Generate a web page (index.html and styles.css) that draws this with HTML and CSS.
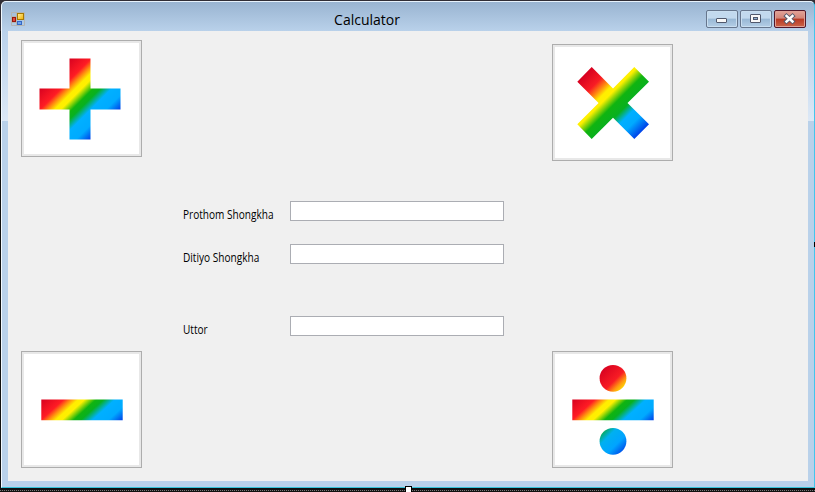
FILE: index.html
```html
<!DOCTYPE html>
<html lang="en">
<head>
<meta charset="utf-8">
<title>Calculator</title>
<link rel="stylesheet" href="styles.css">
</head>
<body>
<svg class="defs" width="0" height="0" aria-hidden="true">
  <defs>
    <linearGradient id="rainbow" gradientUnits="userSpaceOnUse" x1="33" y1="33" x2="84.5" y2="84.5">
      <stop offset="0" stop-color="#d60020"/><stop offset=".22" stop-color="#ff1c24"/><stop offset=".29" stop-color="#ff8a10"/><stop offset=".36" stop-color="#ffee00"/><stop offset=".42" stop-color="#fff000"/><stop offset=".53" stop-color="#10b410"/><stop offset=".6" stop-color="#08b020"/><stop offset=".71" stop-color="#00b0ff"/><stop offset=".86" stop-color="#00aaff"/><stop offset="1" stop-color="#0040e8"/>
    </linearGradient>
    <linearGradient id="rainbow-bar" href="#rainbow" x1="20" y1="48" x2="67.5" y2="100.3"/>
    <linearGradient id="rainbow-times" gradientUnits="userSpaceOnUse" x1="31.3" y1="31.3" x2="88.7" y2="88.7">
      <stop offset="0" stop-color="#d60020"/><stop offset=".18" stop-color="#f81c24"/><stop offset=".27" stop-color="#ff8a10"/><stop offset=".34" stop-color="#ffee00"/><stop offset=".4" stop-color="#fff000"/><stop offset=".52" stop-color="#10b410"/><stop offset=".64" stop-color="#08b020"/><stop offset=".74" stop-color="#00b0ff"/><stop offset=".85" stop-color="#00aaff"/><stop offset="1" stop-color="#0040e8"/>
    </linearGradient>
    <linearGradient id="dot-warm" x1=".1" y1=".1" x2=".9" y2=".9">
      <stop offset="0" stop-color="#d60020"/><stop offset=".58" stop-color="#f81c24"/><stop offset=".8" stop-color="#ff9a10"/><stop offset="1" stop-color="#ffe800"/>
    </linearGradient>
    <linearGradient id="dot-cool" x1=".1" y1=".1" x2=".9" y2=".9">
      <stop offset="0" stop-color="#08a840"/><stop offset=".28" stop-color="#00b0f0"/><stop offset=".65" stop-color="#00a4ff"/><stop offset="1" stop-color="#0048e8"/>
    </linearGradient>
    <linearGradient id="gold" x2="1" y2="1"><stop stop-color="#fff0a0"/><stop offset="1" stop-color="#efb000"/></linearGradient>
  </defs>
</svg>
<div class="window">
  <header class="titlebar">
    <svg class="app-icon" width="14" height="14" viewBox="0 0 14 14">
      <path d="M.5 .5h13v13H.5zM5.5 .5v13M.5 4.5h5M.5 10.5h5" fill="none" stroke="#b3b5b2"/>
      <rect x="6.5" y="1.5" width="6" height="6" fill="url(#gold)" stroke="#a87900"/>
      <rect x="1.5" y="5.5" width="3" height="4" fill="#e04838" stroke="#98170c"/>
      <rect x="6.5" y="9.5" width="4" height="3" fill="#6da4f0" stroke="#3568c4"/>
    </svg>
    <h1 class="title">Calculator</h1>
    <div class="controls">
      <button class="control" aria-label="Minimize"><svg width="30" height="16"><rect x="9.5" y="7.5" width="10" height="4" rx=".5" fill="#f8f8f8" stroke="#50586c"/></svg></button>
      <button class="control" aria-label="Maximize"><svg width="30" height="16"><rect x="9.5" y="3.5" width="10" height="8" rx=".5" fill="#f8f8f8" stroke="#50586c"/><rect x="12.5" y="6.5" width="4" height="2" fill="#8dafd0" stroke="#50586c"/></svg></button>
      <button class="control close" aria-label="Close"><svg width="30" height="16"><path d="M11.5 5l6 5.5M17.500 5l-6 5.500" stroke="#575a6c" stroke-width="4.400" stroke-linecap="square"/><path d="M11.500 5l6 5.500M17.500 5l-6 5.500" stroke="#fff" stroke-width="2.400" stroke-linecap="square"/></svg></button>
    </div>
  </header>
  <main class="client">
    <div class="operators">
      <button class="op" aria-label="Add"><svg width="121" height="117"><path d="M48.500 18.500h21v30h30v21h-30v30h-21v-30h-30v-21h30z" fill="url(#rainbow)"/></svg></button>
      <button class="op" aria-label="Subtract"><svg width="121" height="117"><path d="M20.300 48.600h81.400v20.600H20.300z" fill="url(#rainbow-bar)"/></svg></button>
    </div>
    <form class="fields">
      <label class="field"><span class="name">Prothom Shongkha</span><input type="text"></label>
      <label class="field"><span class="name">Ditiyo Shongkha</span><input type="text"></label>
      <label class="field result"><span class="name">Uttor</span><input type="text"></label>
    </form>
    <div class="operators right">
      <button class="op" aria-label="Multiply"><svg width="121" height="117"><path d="M39.700 23L61 44.500 82.300 23 97 37.700 75.500 59 97 80.300 82.300 95 61 73.700 39.700 95 25.300 80.300 46.600 59 25.300 37.700z" fill="url(#rainbow-times)"/></svg></button>
      <button class="op" aria-label="Divide"><svg width="121" height="117"><circle cx="61" cy="27.300" r="13.400" fill="url(#dot-warm)"/><path d="M20.300 48.600h81.400v20.600H20.300z" fill="url(#rainbow-bar)"/><circle cx="61" cy="90.300" r="13.400" fill="url(#dot-cool)"/></svg></button>
    </div>
  </main>
  <span class="handle east"></span>
  <span class="handle south"></span>
</div>
</body>
</html>
```
FILE: styles.css
```css
* { box-sizing: border-box; }
body {
  margin: 0;
  width: 815px;
  height: 492px;
  overflow: hidden;
  background: repeating-linear-gradient(90deg, #777 0 1px, #181818 1px 2px) 0 490px / 100% 1px no-repeat, linear-gradient(#302d35 0 31px, #101010 31px);
  font-family: "Open Sans", sans-serif;
  color: #000;
}
.defs { position: absolute; }
.window {
  position: relative;
  width: 814px;
  height: 487px;
  margin: 1px 0 0 1px;
  padding: 0 6px 6px 6px;
  border: 1px solid;
  border-color: #e7f2fc #43c5ed #36c3d8 #f2f9ff;
  border-radius: 5px 5px 0 0;
  background:
    linear-gradient(#99b4d1, #b9d1ea) 0 0 / 100% 29px no-repeat,
    linear-gradient(#b9d1ea, #dce8f6) 0 29px / 100% 90px no-repeat,
    #b9d1ea;
}
.titlebar {
  height: 29px;
  display: flex;
  align-items: flex-start;
  padding-right: 2px;
}
.app-icon { margin: 10px 0 0 3px; }
.title {
  flex: 1;
  margin: 7px 0 0;
  padding-left: 3px;
  text-align: center;
  font-size: 14px;
  line-height: 22px;
  font-weight: 400;
}
.controls { display: flex; gap: 2px; padding-top: 8px; }
.control {
  width: 32px;
  height: 18px;
  padding: 0;
  border: 1px solid #66768d;
  border-radius: 2px;
  background: linear-gradient(#c2d9ee 0 45%, #98b8d5 50%, #b4cee6);
  box-shadow: inset 0 0 0 1px #c9def0;
}
.control svg, .op svg { display: block; }
.close {
  border-color: #52172a;
  background: linear-gradient(#e3a398, #d28478 45%, #b83823 50%, #cb6549);
  box-shadow: inset 0 0 0 1px #dfa096;
}
.client {
  height: 450px;
  padding: 9px 0 13px 13px;
  display: flex;
  background: #f0f0f0;
}
.operators {
  width: 121px;
  height: 428px;
  display: flex;
  flex-direction: column;
  justify-content: space-between;
}
.right { padding-top: 4px; }
.op {
  width: 121px;
  height: 117px;
  padding: 0;
  border: 1px solid #adadad;
  background: #fff;
  box-shadow: inset 0 0 0 2px #e8e8e8;
}
.op svg { margin: -1px; }
.fields {
  width: 410px;
  padding: 161px 48px 0 41px;
}
.field {
  display: flex;
  height: 20px;
  margin-bottom: 23px;
}
.result { margin-top: 52px; }
.name {
  width: 107px;
  padding-top: 6px;
  font-size: 12px;
  line-height: 16px;
  white-space: nowrap;
  transform: scaleX(.84);
  transform-origin: left;
}
.field input {
  width: 214px;
  height: 20px;
  padding: 1px 3px;
  border: 1px solid #abadb3;
  background: #fff;
  font: 11px "Open Sans", sans-serif;
}
.handle { position: absolute; }
.east { right: -1px; top: 240px; width: 1px; height: 5px; background: #000; }
.south { left: 404px; top: 485px; width: 5px; height: 5px; background: #fff; box-shadow: 0 0 0 1px #000; }
```
